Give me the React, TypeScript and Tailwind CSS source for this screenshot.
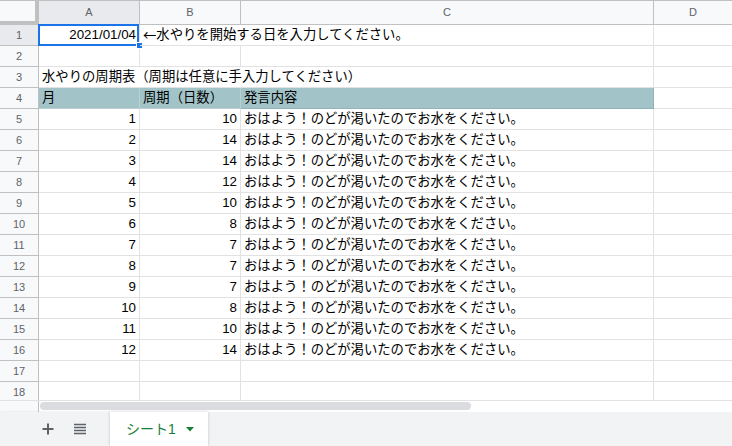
const font = "font-['Liberation_Sans','Noto_Sans_CJK_JP',sans-serif]";

const message = 'おはよう！のどが渇いたのでお水をください。';

const schedule: [number, number][] = [
  [1, 10],
  [2, 14],
  [3, 14],
  [4, 12],
  [5, 10],
  [6, 8],
  [7, 7],
  [8, 7],
  [9, 7],
  [10, 8],
  [11, 10],
  [12, 14],
];

function RowHeader({ n, active }: { n: number; active?: boolean }) {
  return (
    <div
      className={`flex w-[39px] shrink-0 items-center justify-center border-r border-b border-[#c0c0c0] text-[11px] text-[#5f6368] ${
        active ? 'bg-[#e8eaed]' : 'bg-[#f8f9fa]'
      }`}
    >
      {n}
    </div>
  );
}

function ColumnHeaders() {
  return (
    <div className="flex h-[25px] border-t border-[#c0c0c0] text-[11px] text-[#5f6368]">
      <div className="w-[39px] shrink-0 border-r-4 border-b-4 border-[#c0c0c0] bg-[#f8f9fa]" />
      <div className="flex w-[101px] shrink-0 items-center justify-center border-r border-b border-[#c0c0c0] bg-[#e8eaed]">
        A
      </div>
      <div className="flex w-[101px] shrink-0 items-center justify-center border-r border-b border-[#c0c0c0] bg-[#f8f9fa]">
        B
      </div>
      <div className="flex w-[413px] shrink-0 items-center justify-center border-r border-b border-[#c0c0c0] bg-[#f8f9fa]">
        C
      </div>
      <div className="flex flex-1 items-center justify-center border-b border-[#c0c0c0] bg-[#f8f9fa]">
        D
      </div>
    </div>
  );
}

function DataRow({ n, month, days }: { n: number; month: number; days: number }) {
  return (
    <div className="flex h-[21px]">
      <RowHeader n={n} />
      <div className="flex w-[101px] shrink-0 items-center justify-end border-r border-b border-[#e2e2e2] pr-[3px]">
        {month}
      </div>
      <div className="flex w-[101px] shrink-0 items-center justify-end border-r border-b border-[#e2e2e2] pr-[3px]">
        {days}
      </div>
      <div className="flex w-[413px] shrink-0 items-center border-r border-b border-[#e2e2e2] pl-[3px]">
        {message}
      </div>
      <div className="flex-1 border-b border-[#e2e2e2]" />
    </div>
  );
}

function EmptyRow({ n }: { n: number }) {
  return (
    <div className="flex h-[21px]">
      <RowHeader n={n} />
      <div className="w-[101px] shrink-0 border-r border-b border-[#e2e2e2]" />
      <div className="w-[101px] shrink-0 border-r border-b border-[#e2e2e2]" />
      <div className="w-[413px] shrink-0 border-r border-b border-[#e2e2e2]" />
      <div className="flex-1 border-b border-[#e2e2e2]" />
    </div>
  );
}

export default function App() {
  return (
    <div className={`h-[446px] w-[732px] overflow-hidden bg-white text-[13.33px] text-black ${font}`}>
      <div className="h-[400px] overflow-hidden">
        <ColumnHeaders />

        {/* row 1: start date, selected */}
        <div className="flex h-[21px]">
          <RowHeader n={1} active />
          <div className="relative flex w-[101px] shrink-0 items-center justify-end border-r border-b border-[#e2e2e2] pr-[3px]">
            2021/01/04
            <div className="absolute -top-[1px] -left-[1px] h-[22px] w-[101px] border-2 border-[#1a73e8]" />
            <div className="absolute -right-[4px] -bottom-[4px] h-[7px] w-[7px] border border-white bg-[#1a73e8]" />
          </div>
          <div className="relative z-10 flex w-[101px] shrink-0 items-center overflow-visible border-b border-[#e2e2e2] pl-[3px] whitespace-nowrap">
            <span className="font-['Noto_Sans_CJK_JP',sans-serif]">←</span>
            水やりを開始する日を入力してください。
          </div>
          <div className="w-[413px] shrink-0 border-r border-b border-[#e2e2e2]" />
          <div className="flex-1 border-b border-[#e2e2e2]" />
        </div>

        <EmptyRow n={2} />

        {/* row 3: table title overflowing into B and C */}
        <div className="flex h-[21px]">
          <RowHeader n={3} />
          <div className="relative z-10 flex w-[101px] shrink-0 items-center overflow-visible border-b border-[#e2e2e2] pl-[3px] whitespace-nowrap">
            水やりの周期表（周期は任意に手入力してください）
          </div>
          <div className="w-[101px] shrink-0 border-b border-[#e2e2e2]" />
          <div className="w-[413px] shrink-0 border-r border-b border-[#e2e2e2]" />
          <div className="flex-1 border-b border-[#e2e2e2]" />
        </div>

        {/* row 4: table header */}
        <div className="flex h-[21px]">
          <RowHeader n={4} />
          <div className="flex w-[101px] shrink-0 items-center border-r border-b border-[#b9d0d3] bg-[#a2c4c9] pl-[3px]">
            月
          </div>
          <div className="flex w-[101px] shrink-0 items-center border-r border-b border-[#b9d0d3] bg-[#a2c4c9] pl-[3px]">
            周期（日数）
          </div>
          <div className="flex w-[413px] shrink-0 items-center border-r border-b border-[#8fb3b8] bg-[#a2c4c9] pl-[3px]">
            発言内容
          </div>
          <div className="flex-1 border-b border-[#e2e2e2]" />
        </div>

        {schedule.map(([month, days], i) => (
          <DataRow key={month} n={i + 5} month={month} days={days} />
        ))}

        <EmptyRow n={17} />
        <EmptyRow n={18} />
      </div>

      {/* horizontal scrollbar */}
      <div className="flex h-[12px] border-t border-[#e2e2e2]">
        <div className="w-[39px] shrink-0 border-r border-[#c0c0c0] bg-[#f8f9fa]" />
        <div className="flex-1 pt-[1px] pl-[1px]">
          <div className="h-[8px] w-[431px] rounded-full bg-[#dadce0]" />
        </div>
      </div>

      {/* sheet tabs */}
      <div className="flex h-[34px] bg-[#f1f3f4]">
        <div className="flex w-[110px] shrink-0 items-center shadow-[1px_0_2px_rgba(0,0,0,0.12)]">
          <svg className="ml-[42px]" width="12" height="12" viewBox="0 0 12 12">
            <path d="M6 0.5v11M0.5 6h11" stroke="#5f6368" strokeWidth="2" />
          </svg>
          <svg className="ml-[20px]" width="12" height="12" viewBox="0 0 12 12">
            <path d="M0 1.5h12M0 4.5h12M0 7.5h12M0 10.5h12" stroke="#5f6368" strokeWidth="1.6" />
          </svg>
        </div>
        <div className="flex w-[98px] shrink-0 items-center bg-white pl-[16px] text-[14px] text-[#188038] shadow-[0_0_3px_rgba(0,0,0,0.2)]">
          シート1
          <svg className="ml-[10px]" width="8" height="5" viewBox="0 0 8 5">
            <path d="M0 0h8L4 4.5z" fill="#188038" />
          </svg>
        </div>
        <div className="flex-1" />
      </div>
    </div>
  );
}
